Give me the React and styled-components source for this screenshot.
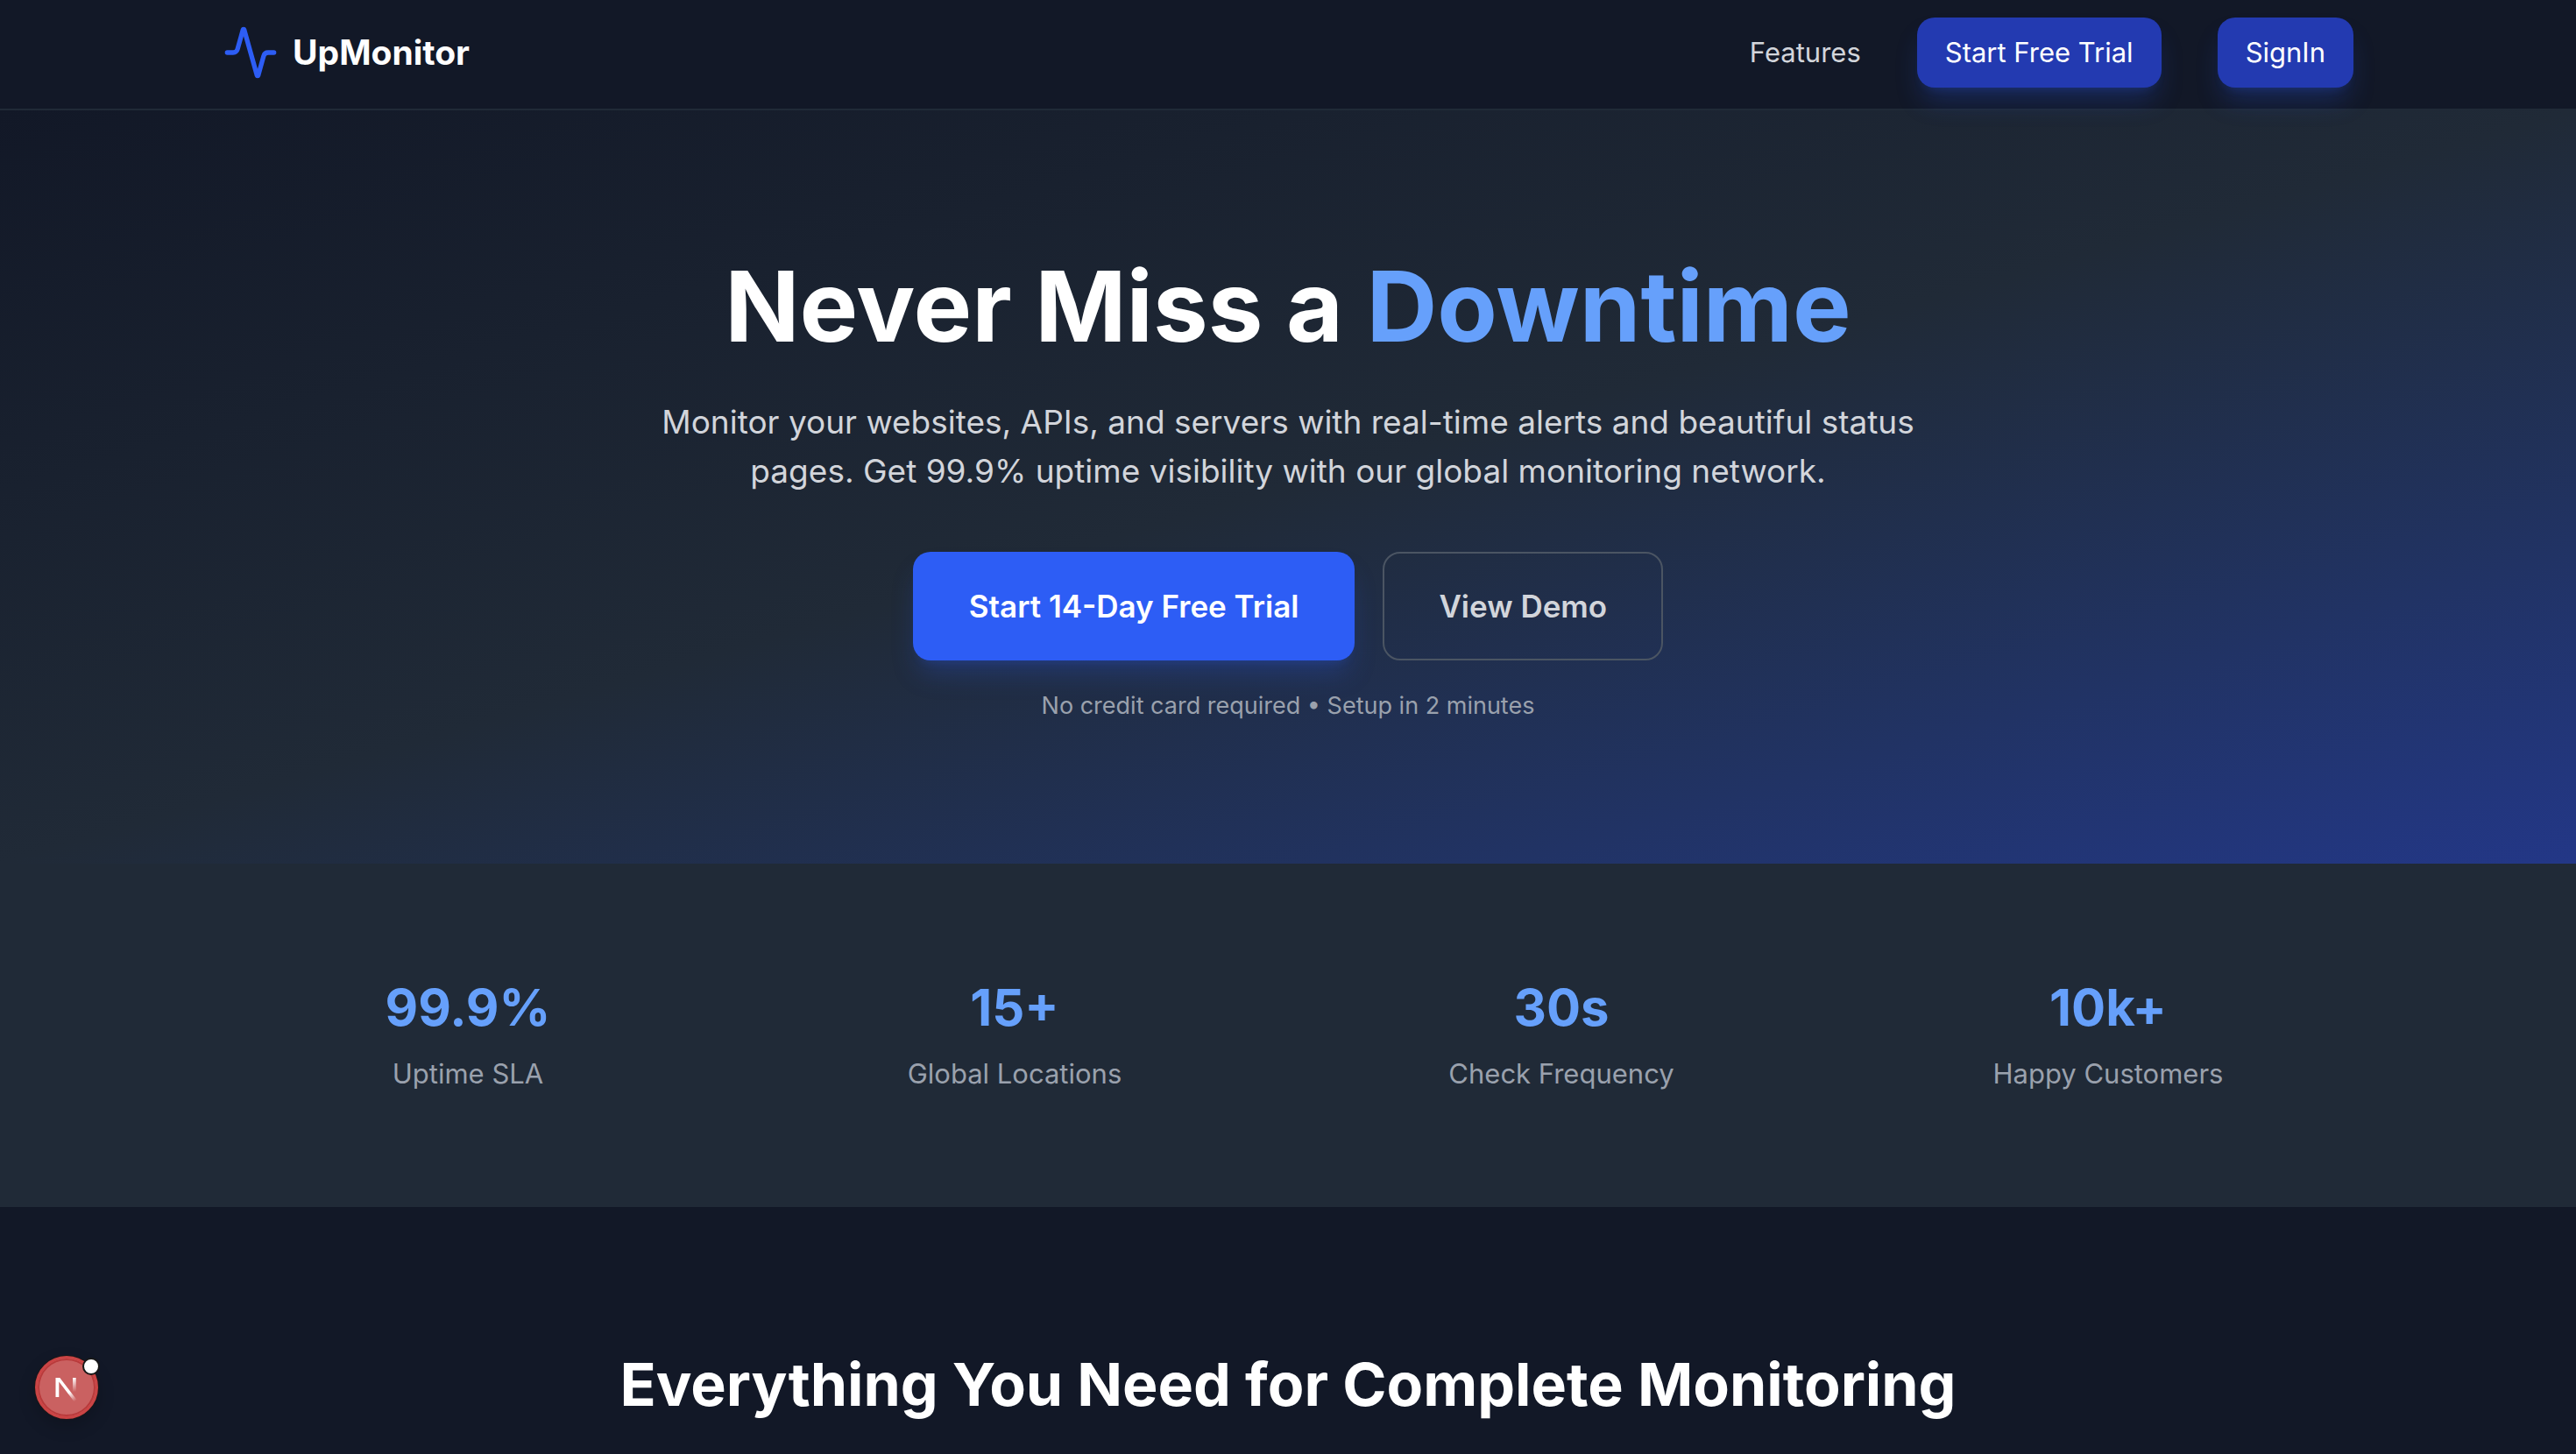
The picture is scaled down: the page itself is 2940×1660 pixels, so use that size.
import React from "react";
import styled, { createGlobalStyle, css } from "styled-components";
import { Activity } from "lucide-react";

const GlobalStyle = createGlobalStyle`
  *, *::before, *::after { box-sizing: border-box; }
  body {
    margin: 0;
    background: #121827;
    color: #ffffff;
    font-family: Inter, "Liberation Sans", sans-serif;
    -webkit-font-smoothing: antialiased;
  }
  h1, h2, p, dl, dt, dd { margin: 0; }
  a { color: inherit; text-decoration: none; }
`;

const Container = styled.div`
  width: 100%;
  max-width: 2560px;
  margin: 0 auto;
  padding: 0 64px;
`;

const Header = styled.header`
  position: sticky;
  top: 0;
  z-index: 10;
  padding: 20px 0 24px;
  background: #121827;
  border-bottom: 2px solid #202a37;
`;

const Bar = styled(Container)`
  display: flex;
  align-items: center;
  justify-content: space-between;
`;

const Brand = styled.a`
  display: flex;
  align-items: center;
  gap: 16px;
  font-size: 39px;
  line-height: 56px;
  font-weight: 700;

  svg { color: #2d5df5; }
`;

const Nav = styled.nav`
  display: flex;
  align-items: center;
  gap: 64px;
  font-size: 31px;
  line-height: 48px;
`;

const NavLink = styled.a`
  color: #d2d5db;
`;

const glow = css`
  box-shadow: 0 20px 30px -6px rgba(45, 93, 245, 0.25),
    0 8px 12px -8px rgba(45, 93, 245, 0.25);
`;

const Button = styled.button`
  border: 0;
  border-radius: 20px;
  padding: 16px 32px;
  background: #233ab1;
  color: #ffffff;
  font: inherit;
  cursor: pointer;
  ${glow}
`;

const Hero = styled.section`
  padding: 160px 0;
  background: linear-gradient(to bottom right in oklab, #121827 0%, #202a37 50%, #233787 100%);
`;

const HeroContent = styled(Container)`
  display: flex;
  flex-direction: column;
  align-items: center;
  text-align: center;
`;

const Title = styled.h1`
  margin-bottom: 42px;
  font-size: 112px;
  line-height: 126px;
  font-weight: 700;

  span { color: #66a0fb; }
`;

const Lead = styled.p`
  max-width: 1472px;
  margin-bottom: 64px;
  color: #d2d5db;
  font-size: 37px;
  line-height: 56px;
`;

const Actions = styled.div`
  display: flex;
  gap: 32px;
  margin-bottom: 32px;
`;

const ActionButton = styled.button`
  padding: 32px ${(p) => (p.$primary ? "64px" : "62px")};
  border: ${(p) => (p.$primary ? "0" : "2px solid #4b5563")};
  border-radius: 20px;
  background: ${(p) => (p.$primary ? "#2d5df5" : "transparent")};
  color: ${(p) => (p.$primary ? "#ffffff" : "#d2d5db")};
  font: inherit;
  font-size: 35px;
  line-height: 56px;
  font-weight: 600;
  cursor: pointer;
  ${(p) => p.$primary && glow}
`;

const Note = styled.p`
  color: #9aa1ad;
  font-size: 27px;
  line-height: 40px;
`;

const Stats = styled.section`
  padding: 128px 0;
  background: #202a37;
`;

const StatGrid = styled(Container).attrs({ as: "dl" })`
  display: grid;
  grid-template-columns: repeat(4, 1fr);
  gap: 64px;
`;

const Stat = styled.div`
  display: flex;
  flex-direction: column-reverse;
  gap: 16px;
  text-align: center;
`;

const StatLabel = styled.dt`
  color: #9aa1ad;
  font-size: 31px;
  line-height: 48px;
`;

const StatValue = styled.dd`
  color: #66a0fb;
  font-size: 58px;
  line-height: 72px;
  font-weight: 700;
`;

const Features = styled.section`
  padding: 160px 0 32px;
  text-align: center;
`;

const SectionTitle = styled.h2`
  font-size: 68px;
  line-height: 84px;
  font-weight: 700;
`;

const DevBadge = styled.button`
  position: fixed;
  left: 40px;
  bottom: 40px;
  display: grid;
  place-items: center;
  width: 72px;
  height: 72px;
  padding: 0;
  border: 3px solid #cb4445;
  border-radius: 50%;
  background: #ca6161;
  box-shadow: inset 0 0 0 2px #b93a3b, 0 0 0 1px #1b1718, 0 8px 20px rgba(0, 0, 0, 0.2);
  cursor: pointer;
`;

const BadgeDot = styled.span`
  position: absolute;
  top: -1px;
  right: -5px;
  width: 20px;
  height: 20px;
  border: 2px solid #171717;
  border-radius: 50%;
  background: #ffffff;
`;

const stats = [
  { value: "99.9%", label: "Uptime SLA" },
  { value: "15+", label: "Global Locations" },
  { value: "30s", label: "Check Frequency" },
  { value: "10k+", label: "Happy Customers" },
];

function NextMark() {
  return (
    <svg width="40" height="40" viewBox="0 0 40 40" fill="none" aria-hidden="true">
      <defs>
        <linearGradient id="diagonal" gradientUnits="userSpaceOnUse" x1="24" y1="25" x2="31" y2="35">
          <stop stopColor="#fff" />
          <stop offset="1" stopColor="#fff" stopOpacity="0" />
        </linearGradient>
        <linearGradient id="stem" gradientUnits="userSpaceOnUse" x1="29" y1="9" x2="29" y2="25">
          <stop stopColor="#fff" />
          <stop offset="1" stopColor="#fff" stopOpacity="0" />
        </linearGradient>
      </defs>
      <path d="M7.5 9H12.3L31.5 34L28.5 36L11.3 13.5V31H7.5Z" fill="url(#diagonal)" />
      <path d="M27 9H30.7V25H27Z" fill="url(#stem)" />
    </svg>
  );
}

export default function App() {
  return (
    <>
      <GlobalStyle />
      <Header>
        <Bar>
          <Brand href="#">
            <Activity size={64} />
            UpMonitor
          </Brand>
          <Nav>
            <NavLink href="#features">Features</NavLink>
            <Button type="button">Start Free Trial</Button>
            <Button type="button">SignIn</Button>
          </Nav>
        </Bar>
      </Header>
      <main>
        <Hero>
          <HeroContent>
            <Title>
              Never Miss a <span>Downtime</span>
            </Title>
            <Lead>
              Monitor your websites, APIs, and servers with real-time alerts and beautiful status
              pages. Get 99.9% uptime visibility with our global monitoring network.
            </Lead>
            <Actions>
              <ActionButton type="button" $primary>
                Start 14-Day Free Trial
              </ActionButton>
              <ActionButton type="button">View Demo</ActionButton>
            </Actions>
            <Note>No credit card required • Setup in 2 minutes</Note>
          </HeroContent>
        </Hero>
        <Stats>
          <StatGrid>
            {stats.map((s) => (
              <Stat key={s.label}>
                <StatLabel>{s.label}</StatLabel>
                <StatValue>{s.value}</StatValue>
              </Stat>
            ))}
          </StatGrid>
        </Stats>
        <Features id="features">
          <Container>
            <SectionTitle>Everything You Need for Complete Monitoring</SectionTitle>
          </Container>
        </Features>
      </main>
      <DevBadge type="button" aria-label="Open developer tools">
        <NextMark />
        <BadgeDot />
      </DevBadge>
    </>
  );
}
